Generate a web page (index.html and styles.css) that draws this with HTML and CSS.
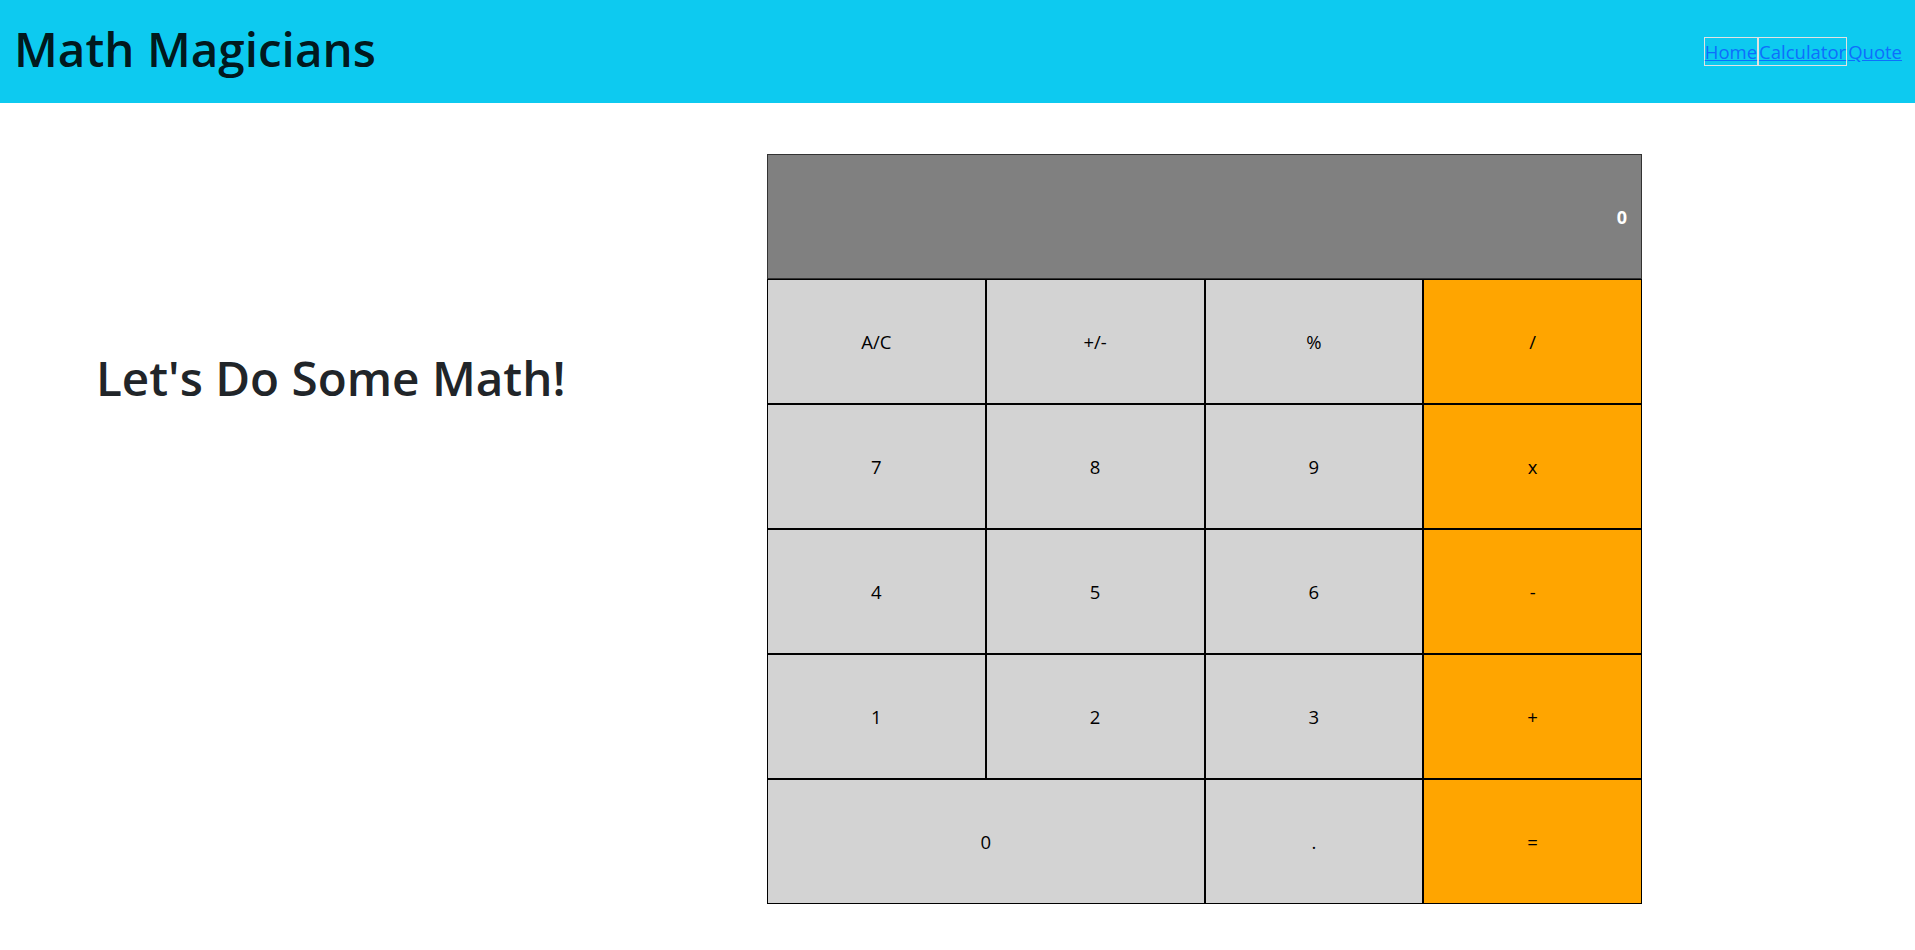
FILE: index.html
```html
<!DOCTYPE html>
<html lang="en">
<head>
<meta charset="utf-8">
<title>Math Magicians</title>
<link rel="stylesheet" href="styles.css">
</head>
<body>
<header class="topbar">
  <h1 class="brand">Math Magicians</h1>
  <nav class="nav">
    <a class="nav-link boxed" href="#">Home</a>
    <a class="nav-link boxed" href="#">Calculator</a>
    <a class="nav-link" href="#">Quote</a>
  </nav>
</header>
<main class="page">
  <section class="intro">
    <h2 class="intro-title">Let's Do Some Math!</h2>
  </section>
  <section class="calculator">
    <div class="screen">0</div>
    <button class="key">A/C</button>
    <button class="key">+/-</button>
    <button class="key">%</button>
    <button class="key op">/</button>
    <button class="key">7</button>
    <button class="key">8</button>
    <button class="key">9</button>
    <button class="key op">x</button>
    <button class="key">4</button>
    <button class="key">5</button>
    <button class="key">6</button>
    <button class="key op">-</button>
    <button class="key">1</button>
    <button class="key">2</button>
    <button class="key">3</button>
    <button class="key op">+</button>
    <button class="key wide">0</button>
    <button class="key">.</button>
    <button class="key op">=</button>
  </section>
</main>
</body>
</html>
```

FILE: styles.css
```css
* { box-sizing: border-box; }

html, body {
  margin: 0;
  padding: 0;
  background: #fff;
  font-family: "Open Sans", "Noto Sans", "DejaVu Sans", sans-serif;
  color: #212529;
}

.topbar {
  height: 103px;
  background: #0dcaf0;
  display: flex;
  align-items: center;
  justify-content: space-between;
  padding: 0 12px 0 14px;
}

.brand {
  margin: 0 0 6px 0;
  font-size: 47.6px;
  font-weight: 600;
  line-height: 1.2;
  color: rgba(0, 0, 0, 0.9);
}

.nav {
  display: flex;
  align-items: center;
}

.nav-link {
  font-size: 18.5px;
  line-height: 27px;
  color: #0d6efd;
  text-decoration: underline;
  border: 1px solid transparent;
}

.nav-link.boxed {
  border-color: #e2e2e2;
}

.page {
  display: flex;
  align-items: flex-start;
  padding-top: 51px;
}

.intro {
  width: 767px;
  padding: 0 0 0 96px;
}

.intro-title {
  margin: 195px 0 0 0;
  font-size: 47.6px;
  font-weight: 600;
  line-height: 1.2;
  color: #212529;
}

.calculator {
  width: 875px;
  display: grid;
  grid-template-columns: repeat(4, 1fr);
  grid-auto-rows: 125px;
}

.screen {
  grid-column: 1 / -1;
  background: #808080;
  border: 1px solid #333;
  color: #fff;
  font-weight: 700;
  font-size: 18px;
  display: flex;
  align-items: center;
  justify-content: flex-end;
  padding-right: 14px;
}

.key {
  margin: 0;
  background: #d3d3d3;
  border: 1px solid #000;
  border-radius: 0;
  font-family: inherit;
  font-size: 18.5px;
  color: #000;
  padding: 0;
}

.key.op {
  background: #ffa500;
}

.key.wide {
  grid-column: span 2;
}
```
